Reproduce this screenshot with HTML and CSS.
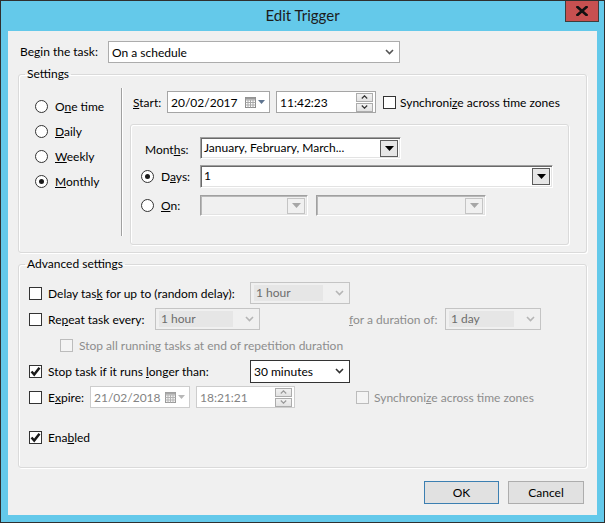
FILE: index.html
```html
<!DOCTYPE html>
<html lang="en">
<head>
    <meta charset="UTF-8">
    <title>Edit Trigger</title>
    <link rel="stylesheet" href="styles.css">
</head>
<body>
    <div class="window">
        <div class="titlebar">
            <span class="title">Edit Trigger</span>
            <span class="close-btn">
                <svg width="12" height="10" viewBox="0 0 12 10"><path d="M1.5 1 L10.5 9 M10.5 1 L1.5 9" stroke="#111" stroke-width="2.6" stroke-linecap="square"/></svg>
            </span>
        </div>

        <div class="client">
            <!-- Begin the task -->
            <div class="begin-row">
                <span class="begin-label">Be<u>g</u>in the task:</span>
                <div class="combo begin-combo">
                    <span class="combo-text">On a schedule</span>
                    <svg class="chev" width="9" height="6" viewBox="0 0 9 6"><path d="M1 1 L4.5 4.5 L8 1" fill="none" stroke="#555" stroke-width="1.6"/></svg>
                </div>
            </div>

            <!-- Settings -->
            <fieldset class="group settings">
                <legend>Settings</legend>
                <div class="settings-body">
                    <div class="schedule-types">
                        <div class="opt-row"><span class="radio"></span><span>O<u>n</u>e time</span></div>
                        <div class="opt-row"><span class="radio"></span><span><u>D</u>aily</span></div>
                        <div class="opt-row"><span class="radio"></span><span><u>W</u>eekly</span></div>
                        <div class="opt-row"><span class="radio checked"></span><span><u>M</u>onthly</span></div>
                    </div>
                    <div class="separator"></div>
                    <div class="schedule-detail">
                        <div class="start-row">
                            <span class="start-label"><u>S</u>tart:</span>
                            <div class="field date-field">
                                <span>20/02/2017</span>
                                <span class="cal-drop">
                                    <svg width="11" height="11" viewBox="0 0 11 11"><rect x="0.5" y="0.5" width="10" height="10" fill="#fff" stroke="#8c8c8c"/><path d="M0.5 3 H10.5 M0.5 5.5 H10.5 M0.5 8 H10.5 M3 3 V10.5 M5.5 3 V10.5 M8 3 V10.5" stroke="#a9a9a9" stroke-width="1"/><rect x="0.5" y="0.5" width="10" height="2" fill="#9a9a9a"/></svg>
                                    <svg width="7" height="4" viewBox="0 0 7 4"><path d="M0 0 H7 L3.5 4 Z" fill="#5f7590"/></svg>
                                </span>
                            </div>
                            <div class="field time-field">
                                <span>11:42:23</span>
                                <span class="spinner">
                                    <span class="spin-btn"><svg width="7" height="4" viewBox="0 0 7 4"><path d="M0.8 3.5 L3.5 0.8 L6.2 3.5" fill="none" stroke="#333" stroke-width="1.2"/></svg></span>
                                    <span class="spin-btn"><svg width="7" height="4" viewBox="0 0 7 4"><path d="M0.8 0.5 L3.5 3.2 L6.2 0.5" fill="none" stroke="#333" stroke-width="1.2"/></svg></span>
                                </span>
                            </div>
                            <span class="checkbox"></span>
                            <span class="check-label">Synchroni<u>z</u>e across time zones</span>
                        </div>

                        <div class="panel">
                            <div class="panel-row months-row">
                                <span class="panel-label months-label">Mont<u>h</u>s:</span>
                                <div class="sunken months-box">
                                    <span class="sunken-text">January, February, March...</span>
                                    <span class="drop-btn"><svg width="9" height="5" viewBox="0 0 9 5"><path d="M0 0 H9 L4.5 5 Z" fill="#000"/></svg></span>
                                </div>
                            </div>
                            <div class="panel-row days-row">
                                <span class="panel-label radio-label"><span class="radio checked"></span><span>D<u>a</u>ys:</span></span>
                                <div class="sunken days-box">
                                    <span class="sunken-text">1</span>
                                    <span class="drop-btn"><svg width="9" height="5" viewBox="0 0 9 5"><path d="M0 0 H9 L4.5 5 Z" fill="#000"/></svg></span>
                                </div>
                            </div>
                            <div class="panel-row on-row">
                                <span class="panel-label radio-label"><span class="radio"></span><span><u>O</u>n:</span></span>
                                <div class="sunken disabled on-box-1">
                                    <span class="drop-btn"><svg width="9" height="5" viewBox="0 0 9 5"><path d="M0 0 H9 L4.5 5 Z" fill="#a6a6a6"/></svg></span>
                                </div>
                                <div class="sunken disabled on-box-2">
                                    <span class="drop-btn"><svg width="9" height="5" viewBox="0 0 9 5"><path d="M0 0 H9 L4.5 5 Z" fill="#a6a6a6"/></svg></span>
                                </div>
                            </div>
                        </div>
                    </div>
                </div>
            </fieldset>

            <!-- Advanced settings -->
            <fieldset class="group advanced">
                <legend>Advanced settings</legend>
                <div class="adv-body">
                    <div class="adv-row">
                        <span class="checkbox"></span>
                        <span class="adv-label delay-label">Delay tas<u>k</u> for up to (random delay):</span>
                        <div class="combo disabled w100">
                            <span class="combo-text">1 hour</span>
                            <svg class="chev" width="9" height="6" viewBox="0 0 9 6"><path d="M1 1 L4.5 4.5 L8 1" fill="none" stroke="#b5b5b5" stroke-width="1.6"/></svg>
                        </div>
                    </div>
                    <div class="adv-row">
                        <span class="checkbox"></span>
                        <span class="adv-label repeat-label">Re<u>p</u>eat task every:</span>
                        <div class="combo disabled w105">
                            <span class="combo-text">1 hour</span>
                            <svg class="chev" width="9" height="6" viewBox="0 0 9 6"><path d="M1 1 L4.5 4.5 L8 1" fill="none" stroke="#b5b5b5" stroke-width="1.6"/></svg>
                        </div>
                        <span class="adv-label duration-label muted"><u>f</u>or a duration of:</span>
                        <div class="combo disabled w96">
                            <span class="combo-text">1 day</span>
                            <svg class="chev" width="9" height="6" viewBox="0 0 9 6"><path d="M1 1 L4.5 4.5 L8 1" fill="none" stroke="#b5b5b5" stroke-width="1.6"/></svg>
                        </div>
                    </div>
                    <div class="adv-row indent">
                        <span class="checkbox disabled"></span>
                        <span class="adv-label muted">Stop all running tasks at end of repetition durat<u>i</u>on</span>
                    </div>
                    <div class="adv-row">
                        <span class="checkbox checked">
                            <svg width="11" height="11" viewBox="0 0 11 11"><path d="M1.5 5.5 L4.2 8.5 L9.5 1.8" fill="none" stroke="#1a1a1a" stroke-width="2.5"/></svg>
                        </span>
                        <span class="adv-label delay-label">Stop task if it runs <u>l</u>onger than:</span>
                        <div class="combo active w100">
                            <span class="combo-text">30 minutes</span>
                            <svg class="chev" width="9" height="6" viewBox="0 0 9 6"><path d="M1 1 L4.5 4.5 L8 1" fill="none" stroke="#333" stroke-width="1.6"/></svg>
                        </div>
                    </div>
                    <div class="adv-row">
                        <span class="checkbox"></span>
                        <span class="adv-label expire-label">E<u>x</u>pire:</span>
                        <div class="field disabled expire-date">
                            <span>21/02/2018</span>
                            <span class="cal-drop">
                                <svg width="11" height="11" viewBox="0 0 11 11"><rect x="0.5" y="0.5" width="10" height="10" fill="#f4f4f4" stroke="#9a9a9a"/><path d="M0.5 3 H10.5 M0.5 5.5 H10.5 M0.5 8 H10.5 M3 3 V10.5 M5.5 3 V10.5 M8 3 V10.5" stroke="#b4b4b4" stroke-width="1"/><rect x="0.5" y="0.5" width="10" height="2" fill="#a8a8a8"/></svg>
                                <svg width="7" height="4" viewBox="0 0 7 4"><path d="M0 0 H7 L3.5 4 Z" fill="#b8b8b8"/></svg>
                            </span>
                        </div>
                        <div class="field disabled expire-time">
                            <span>18:21:21</span>
                            <span class="spinner">
                                <span class="spin-btn"><svg width="7" height="4" viewBox="0 0 7 4"><path d="M0.8 3.5 L3.5 0.8 L6.2 3.5" fill="none" stroke="#9a9a9a" stroke-width="1.2"/></svg></span>
                                <span class="spin-btn"><svg width="7" height="4" viewBox="0 0 7 4"><path d="M0.8 0.5 L3.5 3.2 L6.2 0.5" fill="none" stroke="#9a9a9a" stroke-width="1.2"/></svg></span>
                            </span>
                        </div>
                        <span class="checkbox disabled sync-check"></span>
                        <span class="adv-label muted">Synchroni<u>z</u>e across time zones</span>
                    </div>
                    <div class="adv-row enabled-row">
                        <span class="checkbox checked">
                            <svg width="11" height="11" viewBox="0 0 11 11"><path d="M1.5 5.5 L4.2 8.5 L9.5 1.8" fill="none" stroke="#1a1a1a" stroke-width="2.5"/></svg>
                        </span>
                        <span class="adv-label">Ena<u>b</u>led</span>
                    </div>
                </div>
            </fieldset>

            <div class="buttons">
                <button class="btn default">OK</button>
                <button class="btn">Cancel</button>
            </div>
        </div>
    </div>
</body>
</html>
```

FILE: styles.css
```css
* {
    box-sizing: border-box;
}

body {
    margin: 0;
    font-family: "Segoe UI", Lato, "Liberation Sans", sans-serif;
    font-size: 12px;
    color: #000;
    background: #fff;
}

u {
    text-underline-offset: 1px;
}

/* Window frame */
.window {
    width: 605px;
    height: 523px;
    border: 1px solid #2f2f2f;
    background-color: #64c9ea;
    padding: 0 7px 7px;
    display: flex;
    flex-direction: column;
}

.titlebar {
    height: 30px;
    position: relative;
    display: flex;
    align-items: center;
    justify-content: center;
}

.title {
    font-size: 15px;
    color: #1c1c1c;
    margin-top: -2px;
}

.close-btn {
    position: absolute;
    top: 0;
    right: -2px;
    width: 34px;
    height: 21px;
    background-color: #c75050;
    border: 1px solid #3d3d3d;
    border-top: none;
    display: flex;
    align-items: center;
    justify-content: center;
}

.client {
    flex: 1;
    background-color: #f0f0f0;
    padding: 10px 10px 0 10px;
    display: flex;
    flex-direction: column;
}

/* Begin row */
.begin-row {
    display: flex;
    align-items: center;
    height: 22px;
}

.begin-label {
    width: 88px;
    margin-left: 2px;
    margin-top: -1px;
}

/* Win8 style combo */
.combo {
    height: 22px;
    border: 1px solid #acacac;
    background-color: #fff;
    display: flex;
    align-items: center;
    justify-content: space-between;
    padding: 0 5px 0 3px;
}

.begin-combo {
    width: 292px;
}

.combo-text {
    padding-left: 0;
}

.combo.disabled {
    background-color: #f0f0f0;
    border-color: #c4c4c4;
    color: #6d6d6d;
}

.combo.disabled .combo-text {
    background-color: #e6e6e6;
    flex: 1;
    margin-right: 12px;
    height: 16px;
    line-height: 16px;
    padding-left: 2px;
}

.combo.active {
    border-color: #333;
    height: 23px;
}

.w100 { width: 100px; }
.w105 { width: 105px; }
.w96 { width: 96px; }

/* Group boxes */
.group {
    margin: 0;
    padding: 0;
    border: 1px solid #dadada;
    border-radius: 3px;
    box-shadow: inset 1px 1px 0 #fff, 1px 1px 0 #fff;
    min-width: 0;
}

.group legend {
    padding: 0 2px;
    margin-left: 6px;
    line-height: 16px;
}

.settings {
    margin-top: 3px;
    height: 187px;
}

.settings-body {
    display: flex;
}

.schedule-types {
    width: 102px;
    padding: 12px 0 0 16px;
}

.opt-row {
    height: 25px;
    display: flex;
    align-items: center;
    gap: 7px;
}

.radio {
    width: 13px;
    height: 13px;
    border: 1px solid #333;
    border-radius: 50%;
    background-color: #fff;
    display: inline-flex;
    align-items: center;
    justify-content: center;
    flex-shrink: 0;
}

.radio.checked::after {
    content: "";
    width: 5px;
    height: 5px;
    border-radius: 50%;
    background-color: #1a1a1a;
}

.separator {
    width: 2px;
    height: 148px;
    margin-top: 6px;
    border-left: 1px solid #a0a0a0;
    border-right: 1px solid #fff;
}

.schedule-detail {
    padding-left: 7px;
    padding-top: 9px;
}

.start-row {
    display: flex;
    align-items: center;
    height: 22px;
    padding-left: 3px;
}

.start-label {
    width: 34px;
}

/* Date / time pickers */
.field {
    height: 22px;
    border: 1px solid #a5a5a5;
    background-color: #fff;
    display: flex;
    align-items: center;
    justify-content: space-between;
    padding: 0 2px 0 3px;
}

.date-field {
    width: 103px;
    margin-right: 6px;
}

.time-field {
    width: 100px;
    margin-right: 7px;
}

.cal-drop {
    display: flex;
    align-items: center;
    gap: 2px;
    padding-right: 2px;
}

.spinner {
    display: flex;
    flex-direction: column;
    gap: 1px;
}

.spin-btn {
    width: 17px;
    height: 9px;
    border: 1px solid #acacac;
    background: linear-gradient(#f2f2f2, #e2e2e2);
    display: flex;
    align-items: center;
    justify-content: center;
}

.field.disabled {
    border-color: #cdcdcd;
    color: #838383;
}

.checkbox {
    width: 13px;
    height: 13px;
    border: 1px solid #333;
    background-color: #fff;
    display: inline-flex;
    align-items: center;
    justify-content: center;
    flex-shrink: 0;
}

.checkbox.disabled {
    border-color: #bcbcbc;
    background-color: #f4f4f4;
}

.check-label {
    margin-left: 4px;
}

/* Inner panel */
.panel {
    margin-top: 11px;
    width: 439px;
    height: 121px;
    border: 1px solid #dadada;
    border-radius: 3px;
    box-shadow: inset 1px 1px 0 #fff, 1px 1px 0 #fff;
    padding-top: 12px;
}

.panel-row {
    display: flex;
    align-items: center;
}

.panel-label {
    width: 69px;
    flex-shrink: 0;
}

.months-label {
    padding-left: 14px;
    margin-top: 3px;
}

.radio-label {
    display: flex;
    align-items: center;
    gap: 7px;
    padding-left: 10px;
}

.days-row {
    margin-top: 6px;
}

.on-row {
    margin-top: 7px;
}

/* Classic sunken combo boxes */
.sunken {
    height: 22px;
    background-color: #fff;
    border-top: 1px solid #a0a0a0;
    border-left: 1px solid #a0a0a0;
    border-right: 1px solid #fff;
    border-bottom: 1px solid #fff;
    box-shadow: inset 1px 1px 0 #696969, inset -1px -1px 0 #e3e3e3;
    display: flex;
    align-items: center;
    justify-content: space-between;
    padding: 0 2px 0 3px;
}

.sunken-text {
    padding-bottom: 2px;
}

.drop-btn {
    margin-left: auto;
    width: 18px;
    height: 17px;
    border: 1px solid #5b5b5b;
    background-color: #e6e6e6;
    display: flex;
    align-items: center;
    justify-content: center;
}

.months-box {
    width: 201px;
}

.days-box {
    width: 353px;
    height: 23px;
}

.sunken.disabled {
    background-color: #f0f0f0;
    height: 21px;
    box-shadow: inset 1px 1px 0 #b8b8b8, inset -1px -1px 0 #e3e3e3;
}

.sunken.disabled .drop-btn {
    border-color: #c4c4c4;
    background-color: #f0f0f0;
    height: 16px;
}

.on-box-1 {
    width: 108px;
    margin-right: 8px;
}

.on-box-2 {
    width: 170px;
}

/* Advanced settings */
.advanced {
    margin-top: 3px;
    height: 212px;
}

.adv-body {
    padding: 8px 0 0 10px;
}

.adv-row {
    height: 26px;
    display: flex;
    align-items: center;
}

.adv-row .checkbox {
    margin-right: 6px;
}

.adv-row.indent {
    padding-left: 31px;
}

.delay-label {
    width: 202px;
}

.repeat-label {
    width: 107px;
}

.duration-label {
    width: 96px;
    margin-left: 89px;
}

.expire-label {
    width: 42px;
}

.muted {
    color: #8d8d8d;
}

.expire-date {
    width: 100px;
    margin-right: 6px;
}

.expire-time {
    width: 99px;
}

.sync-check {
    margin-left: 61px;
}

.adv-row .sync-check {
    margin-right: 5px;
}

.enabled-row {
    margin-top: 14px;
}

/* Dialog buttons */
.buttons {
    display: flex;
    justify-content: flex-end;
    gap: 9px;
    margin-top: 13px;
    padding-right: 3px;
}

.btn {
    width: 75px;
    height: 23px;
    font: inherit;
    color: #000;
    background-color: #e1e1e1;
    border: 1px solid #adadad;
    padding: 0;
}

.btn + .btn {
    width: 76px;
}

.btn.default {
    border-color: #3c7fb1;
}
```
